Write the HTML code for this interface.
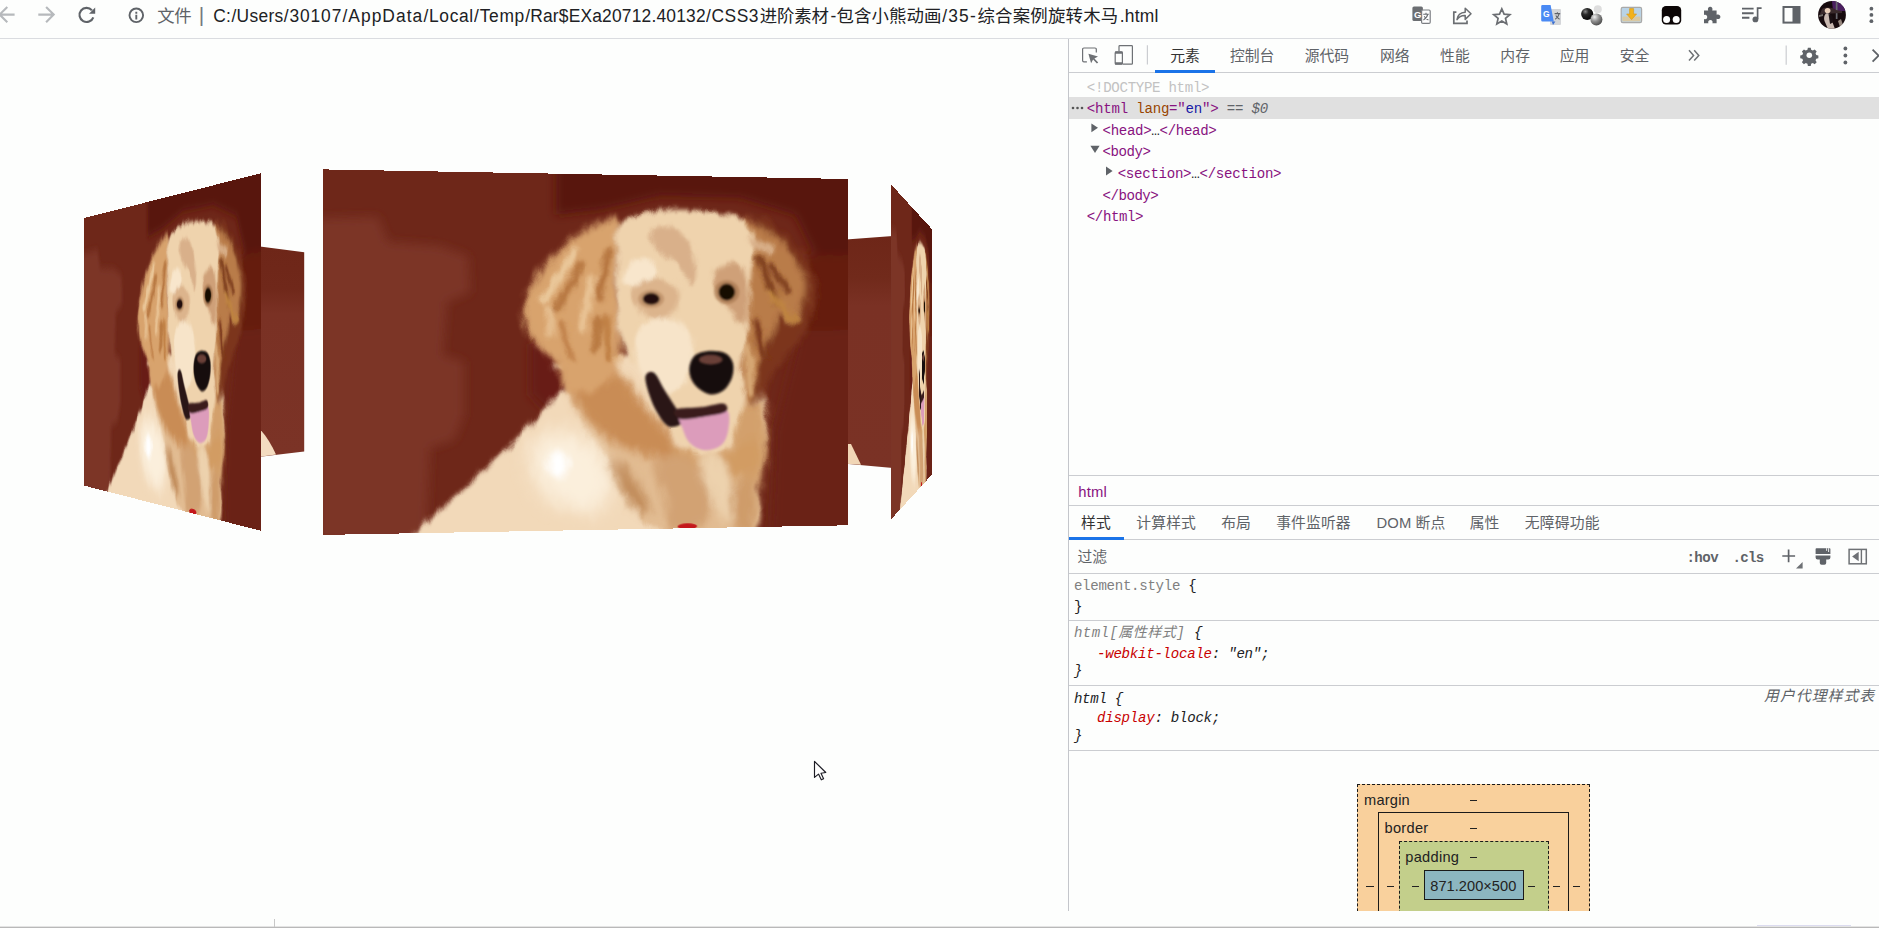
<!DOCTYPE html>
<html lang="zh-CN">
<head>
<meta charset="utf-8">
<title>35-综合案例旋转木马</title>
<style>
html,body{margin:0;padding:0;}
body{width:1879px;height:928px;overflow:hidden;position:relative;background:#fdfefd;font-family:"Liberation Sans","Noto Sans CJK SC",sans-serif;color:#202124;}
.abs{position:absolute;}
.t{position:absolute;white-space:nowrap;line-height:1;}
.hl{position:absolute;height:1px;background:#cbcdd1;}
.vl{position:absolute;width:1px;background:#cbcdd1;}
/* browser toolbar */
#url span{position:absolute;top:6px;font-size:17.4px;line-height:20px;white-space:nowrap;color:#202124;}
/* panels */
.panel{position:absolute;left:0;top:0;width:525px;height:356px;transform-origin:0 0;overflow:hidden;}
.panel svg{display:block;width:525px;height:356px;}
/* devtools */
.tab{position:absolute;top:47px;font-size:14.8px;line-height:17px;color:#5f6368;white-space:nowrap;}
.tab2{position:absolute;top:514px;font-size:14.8px;line-height:17px;color:#5f6368;white-space:nowrap;}
.mono{position:absolute;font-family:"Liberation Mono","Noto Sans CJK SC",monospace;font-size:14.1px;line-height:16px;white-space:pre;color:#202124;}
.tag{color:#881280;}
.an{color:#994500;}
.av{color:#1a1aa6;}
.gr{color:#5f6368;}
.red{color:#c80000;}
.it{font-style:italic;}
.bm{position:absolute;font-size:14.6px;line-height:16px;white-space:nowrap;color:#222;}
</style>
</head>
<body>

<svg width="0" height="0" style="position:absolute">
<defs>
<filter id="bl2" x="-20%" y="-20%" width="140%" height="140%"><feGaussianBlur stdDeviation="1.2"/></filter>
<filter id="bl3" x="-20%" y="-20%" width="140%" height="140%"><feGaussianBlur stdDeviation="2.2"/></filter>
<filter id="bl4" x="-20%" y="-20%" width="140%" height="140%"><feGaussianBlur stdDeviation="3"/></filter>
<filter id="bl5" x="-30%" y="-30%" width="160%" height="160%"><feGaussianBlur stdDeviation="5"/></filter>
<filter id="fur" x="-5%" y="-5%" width="110%" height="110%"><feTurbulence type="fractalNoise" baseFrequency="0.09 0.05" numOctaves="2" seed="7" result="n"/><feDisplacementMap in="SourceGraphic" in2="n" scale="9" xChannelSelector="R" yChannelSelector="G"/></filter>
<filter id="bl8" x="-30%" y="-30%" width="160%" height="160%"><feGaussianBlur stdDeviation="9"/></filter>
<filter id="bl12" x="-30%" y="-30%" width="160%" height="160%"><feGaussianBlur stdDeviation="5"/></filter>
<symbol id="dog" viewBox="0 0 525 356" preserveAspectRatio="none">
<rect width="525" height="356" fill="#6e2719"/>
<g filter="url(#bl12)">
<path d="M-4.8 47.4L52.3 45.6L61.9 70.0L112.0 73.3L139.2 82.9L141.2 118.5L118.8 128.5L114.9 180.7L135.3 187.7L135.2 240.0L125.5 264.6L102.2 272.3L98.3 362.9L-5.0 360.9Z" fill="#7c3427"/>
<path d="M225.8 -13.6L537.1 -19.8L537.2 78.0L489.8 78.4L468.9 37.8L411.9 21.3L330.1 20.6L269.7 35.6L225.8 41.2Z" fill="#59150a"/>
<path d="M477.3 78.6L537.2 78.0L537.2 155.1L474.1 155.3Z" fill="#651e11"/>
<path d="M474.1 155.3L537.2 155.1L537.3 371.4L443.0 369.5L448.1 257.4Z" fill="#6a2215"/>
<path d="M200.0 170.8L224.8 155.8L254.6 215.8L229.7 250.6L200.0 220.6Z" fill="#681f12"/>
</g>
<g filter="url(#fur)">
<g filter="url(#bl3)">
<path d="M223.0 192.1C215.1 194.9 235.3 193.7 237.3 196.9C239.3 200.1 238.9 204.9 234.9 211.2C231.0 217.6 221.8 225.9 213.5 235.0C205.2 244.1 195.7 255.2 185.1 265.8C174.5 276.4 160.8 288.5 149.9 298.6C139.0 308.8 130.8 316.2 119.5 326.6C108.3 337.1 88.6 352.8 82.4 361.4C76.3 369.9 24.2 373.9 82.4 377.8C140.7 381.8 374.4 389.0 431.8 385.2C489.2 381.3 427.2 366.8 426.8 354.6C426.4 342.3 427.6 325.1 429.3 311.9C431.0 298.7 435.3 287.6 436.7 275.4C438.2 263.2 439.2 251.0 438.0 238.8C436.7 226.6 434.4 211.9 429.3 202.1C424.1 192.4 431.0 183.9 407.0 180.2C383.0 176.5 315.9 178.2 285.2 180.2C254.5 182.1 231.0 189.3 223.0 192.1Z" fill="#f2d9b9"/>
<path d="M244.5 189.7C250.8 192.1 262.4 211.7 273.2 221.0C284.0 230.2 298.0 236.7 309.3 245.2C320.6 253.7 330.7 266.3 340.9 272.0C351.0 277.7 359.1 279.5 370.2 279.6C381.2 279.7 396.8 278.2 407.0 272.7C417.3 267.1 426.8 245.6 431.8 246.1C436.7 246.5 437.1 264.4 436.7 275.4C436.3 286.4 431.2 298.1 429.3 311.9C427.4 325.7 443.2 350.8 425.6 358.2C408.0 365.6 344.0 362.7 323.8 356.3C303.7 349.9 311.7 330.8 304.5 319.8C297.2 308.9 288.0 300.4 280.4 290.7C272.8 281.0 265.2 272.1 258.8 261.6C252.4 251.2 246.0 237.2 242.1 228.0C238.1 218.8 234.5 212.8 234.9 206.4C235.3 200.1 238.1 187.3 244.5 189.7Z" fill="#e2bc92"/>
</g>
<g filter="url(#bl5)">
<path d="M237.3 192.1C244.1 187.3 271.6 189.7 285.2 197.0C298.8 204.2 308.9 223.5 319.0 235.6C329.1 247.7 343.3 261.6 345.7 269.6C348.2 277.7 342.1 283.3 333.6 284.0C325.1 284.8 306.1 278.9 294.8 274.0C283.6 269.1 274.4 262.6 266.0 254.5C257.6 246.4 249.2 236.0 244.5 225.6C239.7 215.2 230.5 196.9 237.3 192.1Z" fill="#c98c54"/>
<path d="M407.0 238.6C412.4 229.7 429.1 224.1 434.3 229.0C439.4 233.9 438.4 254.2 438.0 268.1C437.6 281.9 435.3 303.8 431.8 311.9C428.3 320.0 421.9 321.5 416.9 316.6C412.0 311.7 403.8 295.3 402.1 282.3C400.5 269.3 401.7 247.5 407.0 238.6Z" fill="#d3a06c"/>
<path d="M345.7 274.5C350.6 272.9 367.3 282.0 377.5 282.1C387.7 282.2 398.0 278.2 407.0 275.1C416.1 271.9 427.2 260.2 431.8 263.1C436.3 266.0 438.4 285.6 434.3 292.4C430.1 299.3 417.7 302.8 407.0 304.3C396.4 305.8 380.0 303.5 370.2 301.4C360.4 299.3 352.2 295.9 348.2 291.4C344.1 287.0 340.8 276.0 345.7 274.5Z" fill="#d29c64"/>
<path d="M278.0 288.2C278.4 284.2 285.6 283.5 292.4 290.8C299.3 298.1 316.2 324.1 319.0 332.1C321.8 340.2 314.1 342.1 309.3 339.2C304.5 336.3 295.2 323.3 290.0 314.8C284.8 306.3 277.6 292.2 278.0 288.2Z" fill="#c08a58"/>
<path d="M323.9 291.2C327.1 284.8 344.9 280.1 353.1 281.8C361.2 283.5 367.7 292.5 372.6 301.4C377.5 310.4 383.2 326.3 382.4 335.6C381.6 344.8 374.6 353.6 367.7 357.1C360.8 360.7 346.5 362.8 340.9 356.7C335.2 350.5 336.4 331.2 333.6 320.3C330.7 309.4 320.6 297.6 323.9 291.2Z" fill="#d2a273"/>
<path d="M370.2 286.9C370.6 277.9 383.7 276.5 389.8 282.2C395.9 288.0 405.0 310.0 407.0 321.3C409.1 332.7 405.4 348.1 402.1 350.5C398.8 352.8 392.7 346.2 387.3 335.6C382.0 325.0 369.8 295.8 370.2 286.9Z" fill="#edd2ad"/>
<path d="M404.6 316.4C407.9 308.8 423.3 304.9 426.8 311.9C430.3 318.8 428.9 350.5 425.6 358.2C422.3 365.9 410.5 364.8 407.0 357.9C403.5 350.9 401.3 324.1 404.6 316.4Z" fill="#cf9c6a"/>
</g>
<g filter="url(#bl8)"><path d="M204.9 265.4C212.4 258.0 237.2 255.6 249.6 260.8C262.1 265.9 276.3 283.6 279.6 296.1C283.0 308.7 277.9 330.4 269.6 336.1C261.3 341.8 240.5 335.6 229.7 330.5C218.9 325.3 209.0 316.0 204.9 305.2C200.8 294.3 197.5 272.8 204.9 265.4Z" fill="#fbefdc"/></g>
<ellipse cx="227.7" cy="289.5" rx="10" ry="13" fill="#ffffff" filter="url(#bl4)"/>
<g filter="url(#bl4)">
<path d="M286.2 44.9C282.1 39.8 271.3 48.0 263.8 51.4C256.4 54.8 249.0 59.7 241.6 65.3C234.2 71.0 225.6 78.7 219.4 85.4C213.3 92.0 208.8 98.6 204.7 105.2C200.6 111.8 196.7 118.4 194.9 125.0C193.1 131.6 192.6 138.4 193.7 144.7C194.7 151.1 197.5 157.6 201.0 163.2C204.5 168.7 210.0 173.3 214.5 178.0C219.0 182.7 224.9 186.4 228.0 191.6C231.1 196.7 230.2 204.4 232.9 208.9C235.6 213.5 238.0 218.0 244.0 218.9C250.0 219.7 261.7 218.1 268.8 214.0C275.8 209.9 282.4 203.7 286.2 194.2C289.9 184.6 291.2 169.3 291.2 156.8C291.2 144.4 286.6 132.0 286.2 119.5C285.8 107.1 288.7 94.6 288.7 82.2C288.7 69.8 290.4 50.1 286.2 44.9Z" fill="#d8a36d"/>
<path d="M431.8 43.7C437.9 32.4 446.1 49.5 453.9 55.5C461.7 61.4 472.4 70.2 478.6 79.4C484.8 88.6 489.8 100.3 491.0 110.8C492.2 121.3 488.9 133.1 486.0 142.4C483.1 151.7 479.4 158.6 473.7 166.7C467.9 174.8 457.6 182.0 451.4 190.9C445.3 199.7 442.0 213.9 436.7 219.8C431.4 225.8 422.8 242.6 419.5 226.5C416.3 210.4 415.0 153.8 417.1 123.4C419.1 92.9 425.6 55.0 431.8 43.7Z" fill="#7c341b"/>
<path d="M412.2 43.9C415.4 35.9 427.3 47.3 434.2 50.9C441.2 54.4 447.7 59.2 453.9 65.1C460.0 71.1 466.8 79.5 471.2 86.7C475.5 94.0 479.4 100.0 479.8 108.5C480.2 117.0 475.7 130.7 473.7 137.6C471.6 144.5 470.8 149.7 467.5 149.7C464.2 149.7 457.4 136.5 453.9 137.7C450.4 138.9 449.4 150.6 446.5 157.0C443.6 163.5 439.6 169.9 436.7 176.4C433.8 182.8 431.2 187.3 429.3 195.7C427.5 204.0 428.1 221.4 425.7 226.5C423.2 231.7 416.9 235.7 414.6 226.5C412.4 217.3 412.2 192.8 412.2 171.6C412.2 150.4 414.6 120.6 414.6 99.3C414.6 78.0 408.9 52.0 412.2 43.9Z" fill="#b97c48"/>
</g>
<g filter="url(#bl3)">
<path d="M286.2 52.4C290.0 45.3 299.1 42.7 308.7 39.7C318.3 36.6 331.7 34.8 343.8 34.2C356.0 33.5 369.9 34.1 381.8 35.6C393.6 37.1 407.3 37.7 414.9 43.2C422.6 48.6 426.4 57.7 427.7 68.2C429.0 78.7 423.9 93.5 422.6 106.1C421.3 118.7 420.9 132.6 420.0 143.9C419.2 155.3 419.2 165.8 417.5 174.2C415.8 182.6 409.9 188.5 409.8 194.4C409.7 200.2 416.6 202.0 416.9 209.4C417.3 216.8 414.4 228.9 412.0 238.6C409.5 248.3 407.8 260.9 402.1 267.7C396.4 274.6 385.7 279.3 377.5 279.7C369.3 280.0 360.4 275.0 353.1 269.7C345.7 264.4 339.2 255.9 333.6 247.8C327.9 239.7 323.1 230.0 319.0 221.2C315.0 212.3 312.7 200.8 309.3 194.6C305.9 188.5 302.1 190.5 298.7 184.2C295.2 177.9 291.0 167.6 288.7 156.8C286.4 146.1 285.4 132.0 285.0 119.5C284.5 107.1 286.0 93.4 286.2 82.2C286.4 71.0 282.5 59.5 286.2 52.4Z" fill="#efd3ad"/>
</g>
<g filter="url(#bl3)" fill="none" stroke-linecap="round">
<path d="M251.5 90.0 L226.8 134.7" stroke="#b6763f" stroke-width="7"/>
<path d="M278.7 77.3 L268.8 124.6" stroke="#b6763f" stroke-width="8"/>
<path d="M268.8 144.5 L263.8 174.3" stroke="#b87840" stroke-width="8"/>
<path d="M231.7 149.5 L241.5 184.2" stroke="#c08048" stroke-width="6"/>
<path d="M244.0 77.7 L214.5 124.9" stroke="#eac79a" stroke-width="9"/>
<path d="M261.4 104.8 L251.4 154.4" stroke="#e9c394" stroke-width="8"/>
<path d="M219.4 134.8 L219.4 159.5" stroke="#e6bf90" stroke-width="7"/>
<path d="M276.2 144.4 L278.7 184.2" stroke="#c08045" stroke-width="8"/>
<path d="M431.8 82.3 L451.4 128.0" stroke="#7d3c1c" stroke-width="7"/>
<path d="M444.0 89.4 L461.3 115.9" stroke="#7a3a1c" stroke-width="6"/>
<path d="M429.3 147.4 L436.7 181.2" stroke="#7d3a1c" stroke-width="8"/>
<path d="M444.1 118.4 L468.7 147.3" stroke="#c08540" stroke-width="6"/>
<path d="M424.4 63.1 L444.0 74.9" stroke="#d9b08a" stroke-width="8"/>
<path d="M419.5 171.6 L423.2 219.8" stroke="#d9ab78" stroke-width="7"/>
</g>
<g filter="url(#bl3)">
<path d="M321.2 56.9C323.7 52.7 337.5 49.6 343.8 51.7C350.1 53.7 355.2 61.9 359.0 69.0C362.8 76.1 366.1 86.9 366.6 94.0C367.0 101.1 364.5 112.4 361.5 111.6C358.6 110.8 354.3 94.9 348.9 89.1C343.4 83.3 333.3 82.2 328.7 76.8C324.1 71.5 318.7 61.1 321.2 56.9Z" fill="#d9b08a"/>
<path d="M389.4 93.8C393.7 90.0 404.7 85.7 409.8 88.6C414.9 91.5 418.8 101.1 420.0 111.2C421.3 121.2 420.5 144.8 417.5 149.0C414.5 153.2 407.7 142.7 402.2 136.5C396.6 130.2 386.5 118.5 384.3 111.4C382.2 104.3 385.2 97.6 389.4 93.8Z" fill="#cfa078"/>
<path d="M303.7 112.0C307.4 107.4 321.2 103.9 328.7 104.3C336.3 104.7 346.4 108.8 348.9 114.2C351.4 119.6 348.0 131.7 343.8 136.7C339.6 141.7 330.0 145.1 323.7 144.3C317.4 143.5 309.5 137.3 306.2 131.9C302.8 126.5 299.9 116.6 303.7 112.0Z" fill="#dcb48c"/>
<path d="M298.7 89.6C302.8 85.8 313.7 82.8 318.7 84.4C323.7 86.0 330.4 95.1 328.7 99.3C327.1 103.5 314.5 108.1 308.7 109.4C302.8 110.7 295.3 110.4 293.7 107.0C292.0 103.7 294.5 93.4 298.7 89.6Z" fill="#f8e6cc"/>
<path d="M308.7 154.3C314.5 146.0 334.6 141.7 343.8 144.2C353.1 146.7 362.4 158.4 364.0 169.2C365.7 180.1 359.8 201.0 353.9 209.3C348.0 217.6 336.3 221.7 328.7 219.2C321.2 216.7 312.0 205.0 308.7 194.2C305.3 183.4 302.8 162.6 308.7 154.3Z" fill="#f7e4c9"/>
</g>
</g>
<g filter="url(#bl2)">
<ellipse cx="321.2" cy="124.3" rx="13" ry="9" fill="#b98a62" opacity=".7"/>
<ellipse cx="398.3" cy="116.9" rx="13" ry="12" fill="#a87850" opacity=".7"/>
<ellipse cx="321.2" cy="124.3" rx="8.500" ry="6" fill="#24110a"/>
<ellipse cx="398.3" cy="116.9" rx="8.500" ry="8.500" fill="#170906"/>
<path d="M360.2 191.8C361.1 187.8 363.0 183.0 366.6 180.5C370.2 178.0 376.7 176.9 381.8 176.7C386.9 176.5 393.2 177.1 397.1 179.2C400.9 181.3 403.6 185.1 404.7 189.3C405.8 193.5 405.1 199.8 403.4 204.4C401.7 209.0 398.1 214.3 394.5 217.0C390.9 219.7 386.0 221.1 381.8 220.7C377.6 220.3 372.5 217.1 369.1 214.4C365.7 211.6 363.0 208.1 361.5 204.3C360.0 200.5 359.4 195.7 360.2 191.8Z" fill="#160808"/>
<path d="M315.4 201.9C316.3 198.4 321.0 196.4 324.3 199.0C327.7 201.6 331.5 211.3 335.5 217.6C339.5 223.9 344.8 232.0 348.2 237.0C351.5 242.1 356.9 245.3 355.5 248.0C354.1 250.6 344.3 254.6 339.6 253.2C335.0 251.7 330.9 244.8 327.5 239.3C324.1 233.8 321.0 226.2 319.0 220.0C317.0 213.7 314.5 205.4 315.4 201.9Z" fill="#2a1716"/>
<path d="M349.4 238.2C353.1 236.0 366.9 242.2 375.1 242.0C383.2 241.9 394.3 234.7 398.4 237.3C402.5 240.0 400.7 252.1 399.6 258.0C398.6 263.9 396.4 269.3 392.3 272.5C388.2 275.7 380.4 277.7 375.1 277.2C369.8 276.7 364.0 273.5 360.4 269.8C356.7 266.1 354.9 260.5 353.1 255.2C351.2 249.9 345.7 240.4 349.4 238.2Z" fill="#dc9cbb"/>
<path d="M345.7 235.8C349.4 233.8 364.5 234.5 372.6 233.5C380.8 232.6 390.6 229.2 394.7 230.0C398.8 230.8 400.5 236.3 397.2 238.5C393.9 240.7 382.8 242.1 375.1 243.2C367.3 244.4 355.5 246.7 350.6 245.5C345.7 244.3 342.1 237.8 345.7 235.8Z" fill="#3a1d1c"/>
</g>
<ellipse cx="381.8" cy="185.5" rx="12" ry="5" fill="#6a4038" filter="url(#bl2)"/>
<ellipse cx="357.9" cy="354.1" rx="10" ry="3" fill="#c4181c"/>
</symbol>
</defs></svg>
<svg class="abs" style="left:0;top:150px" width="1069" height="420" viewBox="0 150 1069 420">
<defs><linearGradient id="bkl" x1="0" y1="0" x2="0" y2="1"><stop offset="0" stop-color="#6e2618"/><stop offset=".2" stop-color="#70281a"/><stop offset=".32" stop-color="#7a3124"/><stop offset="1" stop-color="#7b3326"/></linearGradient>
<linearGradient id="bkr" x1="0" y1="0" x2="0" y2="1"><stop offset="0" stop-color="#6e2618"/><stop offset=".18" stop-color="#712a1b"/><stop offset=".3" stop-color="#7a3124"/><stop offset="1" stop-color="#7a3225"/></linearGradient></defs>
<path d="M258 246.300L304.200 252.200L304.200 451.500L258 457z" fill="url(#bkl)"/>
<path d="M258 431h3.500q8 9 14.500 23.600L258 457z" fill="#f4dcc0"/>
<path d="M846 239.400L893 236L893 468L846 463.700z" fill="url(#bkr)"/>
<path d="M846 444l5 0l10 20.700L846 463.700z" fill="#f1d6b6"/>
</svg>
<div class="panel" style="transform:matrix3d(0.2116644,-0.16836512,0,-0.0004791217,0,0.75140449,0,0,0,0,1,0,84,218.1,0,1)"><svg viewBox="0 0 525 356" preserveAspectRatio="none"><use href="#dog"/></svg></div>
<div class="panel" style="transform:matrix3d(0.72299235,0.24364094,0,0.00069235844,0,0.93988764,0,0,0,0,1,0,891.2,184.6,0,1)"><svg viewBox="0 0 525 356" preserveAspectRatio="none"><use href="#dog"/></svg></div>
<div class="panel" style="transform:matrix3d(1.0905938,0.037196525,0,0.00010564699,0.0015440781,1.0278458,0,2.1694448e-06,0,0,1,0,323,169.4,0,1)"><svg viewBox="0 0 525 356" preserveAspectRatio="none"><use href="#dog"/></svg></div>
<svg class="abs" style="left:810px;top:756px" width="20" height="28" viewBox="810 756 20 28"><path d="M814.500 761.400V777.400L818.500 774.100L821.300 779.800L823.600 778.700L821 773.200L825.800 772.500Z" fill="#fff" stroke="#1c1c24" stroke-width="1.150" stroke-linejoin="round"/></svg>
<div class="abs" id="tb" style="left:0;top:0;width:1879px;height:38px;background:#fdfefd"></div>
<div class="hl" style="left:0;top:38px;width:1879px;background:#dadce0"></div>
<svg class="abs" style="left:0;top:0" width="160" height="38" viewBox="0 0 160 38" fill="none" stroke-linecap="butt" stroke-linejoin="miter">
<path d="M14.600 14.600H0M7.300 7L-.400 14.600l7.700 7.700" stroke="#b6b9bc" stroke-width="2.100"/>
<path d="M38.300 14.600h14.400M46.100 7l7.600 7.600-7.600 7.700" stroke="#b6b9bc" stroke-width="2.100"/>
<path d="M91.900 10.200A7.100 7.100 0 1 0 93.300 17.300" stroke="#5f6368" stroke-width="2.100"/>
<path d="M95.200 7.600v6.100h-6.200z" fill="#5f6368" stroke="none"/>
<circle cx="136.300" cy="15.300" r="6.800" stroke="#5f6368" stroke-width="1.900"/>
<path d="M136.300 14.700v4.700M136.300 11.800v1.900" stroke="#5f6368" stroke-width="1.900"/>
</svg>
<div id="url">
<span id="f0" class="t" style="left:157.2px;top:6.0px;letter-spacing:-0.398px;color:#5f6368">文件</span>
<span id="f1" class="t" style="left:198.8px;top:3.2px;letter-spacing:-0.869px;color:#74787d;font-size:21px;line-height:24px">|</span>
<span id="f2" class="t" style="left:213.3px;top:6.0px;letter-spacing:0.147px;transform:scaleY(1.08);transform-origin:0 14.5px">C:</span>
<span id="f3" class="t" style="left:231.4px;top:6.0px;letter-spacing:0.325px;transform:scaleY(1.08);transform-origin:0 14.5px">/Users</span>
<span id="f4" class="t" style="left:283.8px;top:6.0px;letter-spacing:0.866px;transform:scaleY(1.08);transform-origin:0 14.5px">/30107</span>
<span id="f5" class="t" style="left:342.4px;top:6.0px;letter-spacing:1.048px;transform:scaleY(1.08);transform-origin:0 14.5px">/AppData</span>
<span id="f6" class="t" style="left:423.5px;top:6.0px;letter-spacing:0.666px;transform:scaleY(1.08);transform-origin:0 14.5px">/Local</span>
<span id="f7" class="t" style="left:474.1px;top:6.0px;letter-spacing:0.708px;transform:scaleY(1.08);transform-origin:0 14.5px">/Temp</span>
<span id="f8" class="t" style="left:525.2px;top:6.0px;letter-spacing:0.192px;transform:scaleY(1.08);transform-origin:0 14.5px">/Rar&#36;EXa20712.40132</span>
<span id="f9" class="t" style="left:706.0px;top:6.0px;letter-spacing:0.547px;transform:scaleY(1.08);transform-origin:0 14.5px">/CSS3</span>
<span id="f10" class="t" style="left:759.7px;top:6.0px;letter-spacing:-0.095px;">进阶素材</span>
<span id="f11" class="t" style="left:830.4px;top:6.0px;letter-spacing:-0.397px;transform:scaleY(1.08);transform-origin:0 14.5px">-</span>
<span id="f12" class="t" style="left:836.4px;top:6.0px;letter-spacing:0.123px;">包含小熊动画</span>
<span id="f13" class="t" style="left:942.3px;top:6.0px;letter-spacing:1.158px;transform:scaleY(1.08);transform-origin:0 14.5px">/35-</span>
<span id="f14" class="t" style="left:977.4px;top:6.0px;letter-spacing:0.232px;">综合案例旋转木马</span>
<span id="f15" class="t" style="left:1119.7px;top:6.0px;letter-spacing:0.222px;transform:scaleY(1.08);transform-origin:0 14.5px">.html</span>
</div>
<svg class="abs" style="left:1400px;top:0" width="479" height="38" viewBox="1400 0 479 38">
<!-- translate -->
<rect x="1412.4" y="6.4" width="10.5" height="14.6" rx="1.6" fill="#6b6e72"/>
<rect x="1421.6" y="10" width="8.6" height="13.4" rx="1.2" fill="#fff" stroke="#7b7e82" stroke-width="1.2"/>
<text x="1414" y="18" font-family="Liberation Sans,sans-serif" font-size="9.5" font-weight="700" fill="#fff">G</text>
<path d="M1423.2 14.2h5.6M1426 12.8v1.4M1427.8 14.2c-.6 2.6-2.2 4.6-4.4 5.8M1424.2 16.2c1 1.8 2.4 3 4.2 3.8" stroke="#6b6e72" stroke-width="1.1" fill="none"/>
<!-- share -->
<path d="M1456.4 12.2H1453.8V23.4H1467V20.6" fill="none" stroke="#6b6e72" stroke-width="1.7"/>
<path d="M1457 19.6c.6-4.6 3.6-7.2 8.2-7.4V8.2l5.8 5.6-5.8 5.6v-4c-3.6-.2-6.2 1-8.2 4.2z" fill="none" stroke="#6b6e72" stroke-width="1.5" stroke-linejoin="round"/>
<!-- star -->
<path d="M1501.8 8.800l2.300 5.300 5.800.5-4.400 3.800 1.300 5.600-5-3-5 3 1.300-5.600-4.400-3.800 5.800-.5z" fill="none" stroke="#6b6e72" stroke-width="1.700" stroke-linejoin="miter"/>
<!-- google translate ext -->
<rect x="1550" y="9" width="11" height="16" rx="1" fill="#d4d6d9"/>
<path d="M1541.2 6.2a1.2 1.2 0 0 1 1.2-1.2h8.2l3.2 16.4h-11.4a1.2 1.2 0 0 1-1.2-1.2z" fill="#4a8af4"/>
<path d="M1551.8 21.4h3.6l-2.4 3.6z" fill="#3b6fd0"/>
<text x="1543" y="17" font-family="Liberation Sans,sans-serif" font-size="8.5" font-weight="700" fill="#fff">G</text>
<path d="M1554.6 13.6h5.6M1557.4 12.2v1.4M1559.2 13.6c-.6 2.6-2 4.4-4 5.6M1555.8 15.6c1 1.8 2.2 2.8 3.8 3.6" stroke="#5f6368" stroke-width="1.1" fill="none"/>
<!-- balls -->
<circle cx="1597.800" cy="9.200" r="4" fill="#dedede"/>
<circle cx="1587.200" cy="14" r="6.100" fill="url(#gball1)"/>
<circle cx="1596.400" cy="19.400" r="6" fill="url(#gball2)"/>
<!-- picture downloader -->
<rect x="1621.2" y="7.4" width="20.4" height="15.2" rx="1.6" fill="#b9d3e6" stroke="#a9a9a9" stroke-width="1.2"/>
<rect x="1622.4" y="16.6" width="18" height="4.8" fill="#d9c9a3"/>
<path d="M1629.6 8.6h4v5.4h3l-5 5.6-5-5.6h3z" fill="#f2b21b" stroke="#d99610" stroke-width=".6"/>
<!-- tampermonkey -->
<rect x="1661.8" y="6" width="19.4" height="18.6" rx="4.2" fill="#0c0606"/>
<circle cx="1666.6" cy="19.4" r="3.5" fill="#fff"/>
<circle cx="1676.2" cy="19.4" r="3.5" fill="#fff"/>
<!-- puzzle -->
<path d="M1704 10.6h4.2c-.9-2 .2-3.8 2-3.8s2.900 1.800 2 3.800h4.400v4.2c2-.9 3.800 .2 3.800 2s-1.800 2.900-3.800 2v4.400h-4.200c.7-1.700-.3-3.200-2-3.200s-2.700 1.500-2 3.200H1704v-4.200c1.800 .8 3.200-.2 3.200-2s-1.400-2.800-3.200-2z" fill="#5f6368"/>
<!-- music list -->
<path d="M1742 8.6h11.600M1742 13.200h11.600M1742 17.800h7.400" stroke="#5f6368" stroke-width="1.900" fill="none"/>
<path d="M1757.600 19V8.200h4" stroke="#5f6368" stroke-width="1.700" fill="none"/>
<circle cx="1755.400" cy="19.400" r="2.900" fill="#5f6368"/>
<!-- side panel -->
<rect x="1783.500" y="7" width="16" height="15.600" fill="none" stroke="#5f6368" stroke-width="2"/>
<rect x="1792.500" y="7" width="7" height="15.600" fill="#5f6368"/>
<!-- avatar -->
<clipPath id="avc"><circle cx="1832" cy="14.900" r="13.900"/></clipPath>
<g clip-path="url(#avc)">
<rect x="1816" y="0" width="32" height="30" fill="#170b0e"/>
<path d="M1832 1h12l4 10h-15z" fill="#4b2060"/>
<rect x="1835.800" y="1" width="1.700" height="18" fill="#6a6a70"/>
<path d="M1822 9c4-2 10-2 14 1l6 1v2l-22 1z" fill="#3a2a2c"/>
<ellipse cx="1827.600" cy="10.600" rx="2.900" ry="2.600" fill="#e8cdb8"/>
<path d="M1826 13.500c2.500-.5 4 .5 4.500 2.500l1.500 5 3 8h-7l-3.500-8c-.8-2.500-.5-6 1.500-7.500z" fill="#c9b8b0"/>
<path d="M1828.500 14c2 0 3.800 1.200 4.200 3.500l.3 5-3 1.500z" fill="#1a1014"/>
<path d="M1838 21l3-2 2 6-3 2z" fill="#b8a79c" opacity=".8"/>
<path d="M1819 15l4-1v2l-4 1z" fill="#8a8480" opacity=".8"/>
</g>
<!-- menu -->
<circle cx="1871.400" cy="8.700" r="1.900" fill="#5f6368"/><circle cx="1871.400" cy="14.900" r="1.900" fill="#5f6368"/><circle cx="1871.400" cy="21.200" r="1.900" fill="#5f6368"/>
<defs>
<radialGradient id="gball1" cx=".35" cy=".3" r=".75"><stop offset="0" stop-color="#8a8a8a"/><stop offset=".35" stop-color="#2a2a2a"/><stop offset="1" stop-color="#050505"/></radialGradient>
<radialGradient id="gball2" cx=".35" cy=".3" r=".75"><stop offset="0" stop-color="#f0f0f0"/><stop offset=".5" stop-color="#8e8e8e"/><stop offset="1" stop-color="#4a4a4a"/></radialGradient>
</defs>
</svg>
<div class="abs" style="left:1069px;top:39px;width:810px;height:872px;background:#fdfefd"></div>
<div class="vl" style="left:1068px;top:39px;height:872px;background:#c4c6cb"></div>
<div class="hl" style="left:1069px;top:72px;width:810px"></div>
<div class="abs" style="left:1155px;top:70px;width:60px;height:3px;background:#1a73e8"></div>
<svg class="abs" style="left:1069px;top:39px" width="810" height="34" viewBox="1069 39 810 34" fill="none">
<path d="M1086.900 61.800H1083.900a1.300 1.300 0 0 1-1.300-1.300V49.300a1.300 1.300 0 0 1 1.300-1.300H1095a1.300 1.300 0 0 1 1.300 1.300V52.600" stroke="#6e7175" stroke-width="1.200"/>
<path d="M1088.400 53.800l9.600 2.600-3.600 2 3.800 4-1.300 1.200-3.800-4-2 3.600z" fill="#6e7175"/>
<path d="M1119 51.300V46.400a.8 .8 0 0 1 .8-.8H1131.600a.8 .8 0 0 1 .8 .8V63.400a.8 .8 0 0 1-.8 .8H1123" stroke="#6e7175" stroke-width="1.200"/>
<rect x="1115.200" y="51.900" width="7.200" height="12.300" rx="1" stroke="#6e7175" stroke-width="1.200"/>
<path d="M1115 52.600h7.600M1115 63.400h7.600" stroke="#6e7175" stroke-width="2.300"/>
<path d="M1147.400 45.200V64.400" stroke="#cbcdd1" stroke-width="1.200"/>
<path d="M1689 50.200l4.600 5.200-4.600 5.200M1694.200 50.200l4.600 5.200-4.600 5.200" stroke="#6e7175" stroke-width="1.500"/>
<path d="M1786.200 45.600V64.800" stroke="#cbcdd1" stroke-width="1.200"/>
<g transform="translate(1809.300 55.300) scale(.84)"><path d="M-1.700-9h3.400l.5 2.500 2 .9 2.200-1.400 2.400 2.400-1.400 2.200.9 2 2.500.5v3.400l-2.500.5-.9 2 1.400 2.200-2.400 2.400-2.200-1.400-2 .9-.5 2.500h-3.400l-.5-2.500-2-.9-2.200 1.400-2.400-2.400 1.400-2.200-.9-2-2.500-.5v-3.400l2.500-.5.9-2-1.400-2.200 2.400-2.400 2.200 1.400 2-.9z" fill="#5f6368"/><circle r="3.300" fill="#fdfefd"/></g>
<circle cx="1845.400" cy="48.500" r="1.900" fill="#5f6368"/><circle cx="1845.400" cy="55.500" r="1.900" fill="#5f6368"/><circle cx="1845.400" cy="62.500" r="1.900" fill="#5f6368"/>
<path d="M1872.600 49.600l6 6-6 6" stroke="#5f6368" stroke-width="1.800"/>
</svg>
<span id="f16" class="tab" style="left:1170.2px;top:48.4px;letter-spacing:-0.055px;color:#333">元素</span>
<span id="f17" class="tab" style="left:1230.0px;top:48.4px;letter-spacing:-0.069px;">控制台</span>
<span id="f18" class="tab" style="left:1304.8px;top:48.4px;letter-spacing:-0.069px;">源代码</span>
<span id="f19" class="tab" style="left:1379.9px;top:48.4px;letter-spacing:0.095px;">网络</span>
<span id="f20" class="tab" style="left:1440.1px;top:48.4px;letter-spacing:0.145px;">性能</span>
<span id="f21" class="tab" style="left:1500.3px;top:48.4px;letter-spacing:0.045px;">内存</span>
<span id="f22" class="tab" style="left:1559.7px;top:48.4px;letter-spacing:-0.005px;">应用</span>
<span id="f23" class="tab" style="left:1619.7px;top:48.4px;letter-spacing:0.095px;">安全</span>
<div class="abs" style="left:1069px;top:97px;width:810px;height:21.500px;background:#e0e0e0"></div>
<span id="f24" class="mono" style="left:1086.8px;top:80.0px;letter-spacing:-0.292px;color:#c2c2c2">&lt;!DOCTYPE html&gt;</span>
<svg class="abs" style="left:1071px;top:105px" width="14" height="6"><circle cx="2" cy="3" r="1.300" fill="#555"/><circle cx="6.500" cy="3" r="1.300" fill="#555"/><circle cx="11" cy="3" r="1.300" fill="#555"/></svg>
<span id="f25" class="mono" style="left:1086.8px;top:101.0px;letter-spacing:-0.228px;"><span class="tag">&lt;html </span><span class="an">lang</span><span class="tag">="</span><span class="av">en</span><span class="tag">"&gt;</span><span class="gr it"> == $0</span></span>
<span id="f26" class="mono" style="left:1102.5px;top:122.8px;letter-spacing:-0.317px;"><span class="tag">&lt;head&gt;</span>…<span class="tag">&lt;/head&gt;</span></span>
<span id="f27" class="mono" style="left:1102.5px;top:144.1px;letter-spacing:-0.458px;"><span class="tag">&lt;body&gt;</span></span>
<span id="f28" class="mono" style="left:1117.7px;top:165.8px;letter-spacing:-0.279px;"><span class="tag">&lt;section&gt;</span>…<span class="tag">&lt;/section&gt;</span></span>
<span id="f29" class="mono" style="left:1102.5px;top:188.1px;letter-spacing:-0.488px;"><span class="tag">&lt;/body&gt;</span></span>
<span id="f30" class="mono" style="left:1086.8px;top:208.9px;letter-spacing:-0.417px;"><span class="tag">&lt;/html&gt;</span></span>
<svg class="abs" style="left:1088px;top:120px" width="30" height="60" viewBox="1088 120 30 60">
<path d="M1091.400 123.400l6.600 4.400-6.600 4.400z" fill="#5f6368"/>
<path d="M1090.400 145.800h9.200l-4.600 7.200z" fill="#5f6368"/>
<path d="M1106 166.600l6.600 4.400-6.600 4.400z" fill="#5f6368"/>
</svg>
<div class="hl" style="left:1069px;top:475px;width:810px"></div>
<span id="f31" class="t" style="left:1078.3px;top:484.0px;letter-spacing:0.208px;font-size:14.800px;line-height:17px;color:#881280">html</span>
<div class="hl" style="left:1069px;top:505px;width:810px"></div>
<span id="f32" class="tab2" style="left:1080.9px;top:515.1px;letter-spacing:0.245px;color:#333">样式</span>
<span id="f33" class="tab2" style="left:1136.3px;top:515.1px;letter-spacing:0.124px;">计算样式</span>
<span id="f34" class="tab2" style="left:1221.3px;top:515.1px;letter-spacing:-0.205px;">布局</span>
<span id="f35" class="tab2" style="left:1276.2px;top:515.1px;letter-spacing:0.120px;">事件监听器</span>
<span id="f36" class="tab2" style="left:1376.5px;top:515.1px;letter-spacing:0.111px;">DOM 断点</span>
<span id="f37" class="tab2" style="left:1469.8px;top:515.1px;letter-spacing:-0.005px;">属性</span>
<span id="f38" class="tab2" style="left:1524.7px;top:515.1px;letter-spacing:0.200px;">无障碍功能</span>
<div class="hl" style="left:1069px;top:539px;width:810px"></div>
<div class="abs" style="left:1069px;top:537px;width:55px;height:2.500px;background:#1a73e8"></div>
<span id="f39" class="t" style="left:1077.4px;top:549.3px;letter-spacing:0.045px;font-size:14.800px;line-height:17px;color:#5f6368">过滤</span>
<span id="f40" class="mono" style="left:1686.4px;top:549.5px;letter-spacing:-0.511px;color:#5f6368;font-weight:bold">:hov</span>
<span id="f41" class="mono" style="left:1732.6px;top:549.5px;letter-spacing:-0.711px;color:#5f6368;font-weight:bold">.cls</span>
<svg class="abs" style="left:1775px;top:544px" width="100" height="28" viewBox="1775 544 100 28" fill="none">
<path d="M1782.300 556h12.800M1788.600 549.600v12.600" stroke="#5f6368" stroke-width="1.700"/>
<path d="M1802.600 562v6.600h-6.600z" fill="#6e7175"/>
<path d="M1816.400 548.200h13.200a.8 .8 0 0 1 .8 .8v5h-14.800v-5a.8 .8 0 0 1 .8-.8z" fill="#5f6368"/>
<path d="M1815.600 555.600h14.800v2a2 2 0 0 1-2 2h-2.200v3.400a1.800 1.800 0 0 1-1.800 1.800h-2.800a1.800 1.800 0 0 1-1.800-1.800v-3.400h-2.200a2 2 0 0 1-2-2z" fill="#5f6368"/>
<path d="M1826.600 548.200v2.600M1828.600 548.200v3.800" stroke="#fdfefd" stroke-width=".9"/>
<rect x="1849.100" y="549.400" width="17.200" height="14.400" stroke="#6e7175" stroke-width="1.500"/>
<path d="M1861.400 549.400v14.400" stroke="#6e7175" stroke-width="1.400"/>
<path d="M1858.700 551.800v9.400l-6.600-4.700z" fill="#6e7175"/>
</svg>
<div class="hl" style="left:1069px;top:573px;width:810px"></div>
<span id="f42" class="mono" style="left:1073.9px;top:578.0px;letter-spacing:-0.292px;"><span style="color:#808080">element.style</span> {</span>
<span id="f43" class="mono" style="left:1073.9px;top:598.5px;letter-spacing:-0.369px;">}</span>
<div class="hl" style="left:1069px;top:620px;width:810px"></div>
<span id="f44" class="mono it" style="left:1073.9px;top:624.7px;letter-spacing:0.421px;"><span style="color:#808080">html[属性样式]</span> {</span>
<span id="f45" class="mono it" style="left:1097.0px;top:645.6px;letter-spacing:-0.259px;"><span class="red">-webkit-locale</span>: "en";</span>
<span id="f46" class="mono it" style="left:1073.9px;top:663.0px;letter-spacing:-0.369px;">}</span>
<div class="hl" style="left:1069px;top:685px;width:810px"></div>
<span id="f47" class="mono it" style="left:1073.9px;top:690.5px;letter-spacing:-0.275px;">html {</span>
<span id="f48" class="t it" style="left:1764.0px;top:689.0px;letter-spacing:1.087px;font-size:14.800px;line-height:17px;color:#5f6368;font-family:'Liberation Mono','Noto Sans CJK SC',monospace">用户代理样式表</span>
<span id="f49" class="mono it" style="left:1097.0px;top:710.1px;letter-spacing:-0.259px;"><span class="red">display</span>: block;</span>
<span id="f50" class="mono it" style="left:1073.9px;top:727.5px;letter-spacing:-0.369px;">}</span>
<div class="hl" style="left:1069px;top:750px;width:810px"></div>
<div class="abs" style="left:1357px;top:784px;width:233px;height:127px;overflow:hidden">
<div class="abs" style="left:0;top:0;width:231px;height:200px;background:#f9d09c;border:1px dashed #1a1a1a"></div>
<div class="abs" style="left:21px;top:28px;width:188.600px;height:200px;background:#f9d19d;border:1px solid #1a1a1a"></div>
<div class="abs" style="left:42px;top:57px;width:148px;height:200px;background:#c3cf8b;border:1px dashed #1a1a1a"></div>
<div class="abs" style="left:67px;top:86px;width:98px;height:28px;background:#8cb6c0;border:1px solid #1a1a1a"></div>
</div>
<span id="f51" class="bm" style="left:1364.1px;top:792.2px;letter-spacing:0.198px;">margin</span>
<span id="f52" class="bm" style="left:1384.5px;top:820.0px;letter-spacing:0.302px;">border</span>
<span id="f53" class="bm" style="left:1405.3px;top:849.0px;letter-spacing:0.292px;">padding</span>
<span id="f54" class="bm" style="left:1430.3px;top:877.5px;letter-spacing:0.034px;">871.200×500</span>
<div class="abs" style="left:1470.2px;top:799.9px;width:7.200px;height:1.300px;background:#222"></div>
<div class="abs" style="left:1470.2px;top:827.7px;width:7.200px;height:1.300px;background:#222"></div>
<div class="abs" style="left:1470.2px;top:856.7px;width:7.200px;height:1.300px;background:#222"></div>
<div class="abs" style="left:1366.4px;top:885.9px;width:7.200px;height:1.300px;background:#222"></div>
<div class="abs" style="left:1387.2px;top:885.9px;width:7.200px;height:1.300px;background:#222"></div>
<div class="abs" style="left:1411.9px;top:885.9px;width:7.200px;height:1.300px;background:#222"></div>
<div class="abs" style="left:1527.5px;top:885.9px;width:7.200px;height:1.300px;background:#222"></div>
<div class="abs" style="left:1552.6px;top:885.9px;width:7.200px;height:1.300px;background:#222"></div>
<div class="abs" style="left:1573.0px;top:885.9px;width:7.200px;height:1.300px;background:#222"></div>
<div class="abs" style="left:0;top:927px;width:1879px;height:1px;background:#b9b9b9"></div><div class="abs" style="left:0;top:926px;width:1879px;height:1px;background:#e4e4e4"></div><div class="abs" style="left:274px;top:919px;width:1px;height:8px;background:#c8c8c8"></div><div class="abs" style="left:1757px;top:925px;width:94px;height:1px;background:#dcdcf0"></div>
</body>
</html>
